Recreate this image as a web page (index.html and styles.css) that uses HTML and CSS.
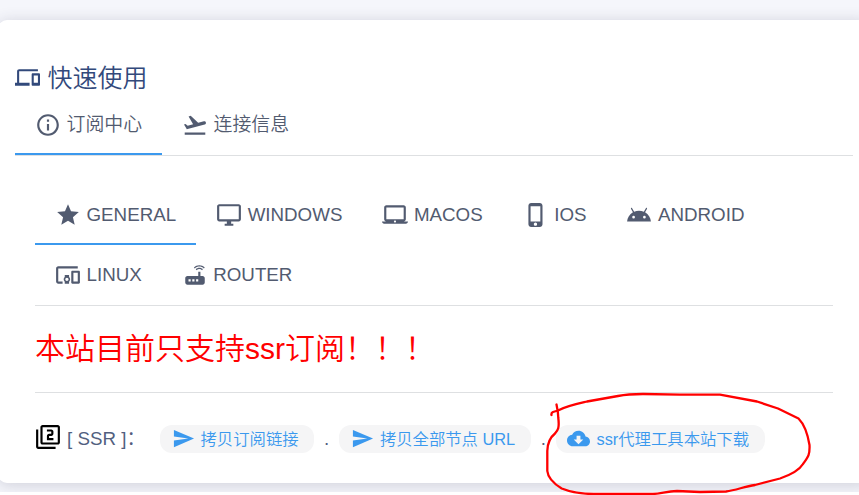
FILE: index.html
```html
<!DOCTYPE html>
<html lang="zh-CN">
<head>
<meta charset="utf-8">
<title>快速使用</title>
<link rel="stylesheet" href="styles.css">
</head>
<body>
<main class="page">
  <section class="card">
    <h2 class="title">
      <svg class="icon" viewBox="0 0 24 24"><path d="M4 6h18V4H4c-1.1 0-2 .9-2 2v11H0v3h14v-3H4V6zm19 2h-6c-.55 0-1 .45-1 1v10c0 .55.45 1 1 1h6c.55 0 1-.45 1-1V9c0-.55-.45-1-1-1zm-1 9h-4v-7h4v7z"/></svg>
      <span>快速使用</span>
    </h2>
    <nav class="tabs tabs-main">
      <a class="tab active"><svg class="icon" viewBox="0 0 24 24"><path d="M11 17h2v-6h-2v6zm1-15C6.48 2 2 6.48 2 12s4.48 10 10 10 10-4.48 10-10S17.520 2 12 2zm0 18c-4.410 0-8-3.590-8-8s3.590-8 8-8 8 3.590 8 8-3.590 8-8 8zM11 9h2V7h-2v2z"/></svg><span>订阅中心</span></a>
      <a class="tab"><svg class="icon" viewBox="0 0 24 24"><path d="M2.5 19h19v2h-19zm19.570-9.360c-.21-.8-1.040-1.280-1.840-1.060L14.920 10l-6.900-6.430-1.930.51 4.140 7.170-4.970 1.330-1.970-1.540-1.450.39 1.820 3.160.77 1.330 1.600-.43 5.310-1.420 4.350-1.160L21 11.490c.81-.23 1.280-1.050 1.070-1.850z"/></svg><span>连接信息</span></a>
    </nav>
    <div class="panel">
      <nav class="tabs tabs-os">
        <a class="tab active"><svg class="icon" viewBox="0 0 24 24"><path d="M12 17.270L18.180 21l-1.640-7.030L22 9.240l-7.190-.61L12 2 9.190 8.630 2 9.240l5.460 4.730L5.820 21z"/></svg><span>GENERAL</span></a>
        <a class="tab"><svg class="icon" viewBox="0 0 24 24"><path d="M21 2H3c-1.100 0-2 .9-2 2v12c0 1.100.9 2 2 2h7v2H8v2h8v-2h-2v-2h7c1.100 0 2-.9 2-2V4c0-1.100-.9-2-2-2zm0 14H3V4h18v12z"/></svg><span>WINDOWS</span></a>
        <a class="tab"><svg class="icon" viewBox="0 0 24 24"><path d="M20 18c1.100 0 1.990-.9 1.990-2L22 5c0-1.100-.9-2-2-2H4c-1.100 0-2 .9-2 2v11c0 1.100.9 2 2 2H0c0 1.100.9 2 2 2h20c1.100 0 2-.9 2-2h-4zM4 5h16v11H4V5zm8 14c-.55 0-1-.45-1-1s.45-1 1-1 1 .45 1 1-.45 1-1 1z"/></svg><span>MACOS</span></a>
        <a class="tab"><svg class="icon" viewBox="0 0 24 24"><path d="M15.500 1h-8C6.120 1 5 2.120 5 3.500v17C5 21.880 6.120 23 7.500 23h8c1.380 0 2.500-1.120 2.500-2.500v-17C18 2.120 16.880 1 15.500 1zm-4 21c-.83 0-1.500-.67-1.500-1.500s.67-1.500 1.500-1.500 1.500.67 1.500 1.500-.67 1.500-1.500 1.500zm4.500-4H7V4h9v14z"/></svg><span>IOS</span></a>
        <a class="tab"><svg class="icon" viewBox="0 0 24 24"><path d="M17.600 9.480l1.840-3.180c.16-.31.04-.69-.26-.85-.29-.15-.65-.06-.83.22l-1.880 3.240c-2.860-1.210-6.080-1.210-8.940 0L5.650 5.670c-.19-.29-.58-.38-.87-.2-.28.18-.37.54-.22.83L6.400 9.480C3.300 11.250 1.280 14.440 1 18h22c-.28-3.560-2.300-6.750-5.400-8.520zM7 15.250a1.250 1.250 0 1 1 0-2.500 1.250 1.250 0 0 1 0 2.500zm10 0a1.250 1.250 0 1 1 0-2.500 1.250 1.250 0 0 1 0 2.500z"/></svg><span>ANDROID</span></a>
        <a class="tab"><svg class="icon" viewBox="0 0 24 24"><path d="M3 6h18V4H3c-1.100 0-2 .9-2 2v12c0 1.100.9 2 2 2h4v-2H3V6zm10 6H9v1.780c-.61.55-1 1.330-1 2.220s.39 1.670 1 2.220V20h4v-1.780c.61-.55 1-1.340 1-2.220s-.39-1.670-1-2.220V12zm-2 5.500c-.83 0-1.500-.67-1.500-1.500s.67-1.500 1.500-1.500 1.500.67 1.500 1.500-.67 1.500-1.500 1.500zM22 8h-6c-.5 0-1 .5-1 1v10c0 .5.5 1 1 1h6c.5 0 1-.5 1-1V9c0-.5-.5-1-1-1zm-1 10h-4v-8h4v8z"/></svg><span>LINUX</span></a>
        <a class="tab"><svg class="icon" viewBox="0 0 24 24"><path d="M20.200 5.900l.8-.8C19.600 3.700 17.800 3 16 3s-3.600.7-5 2.100l.8.8C13 4.800 14.500 4.200 16 4.200s3 .6 4.200 1.700zm-.9.8c-.9-.9-2.100-1.400-3.300-1.400s-2.400.5-3.300 1.400l.8.8c.7-.7 1.600-1 2.500-1s1.800.3 2.500 1l.8-.8zM19 13h-2V9h-2v4H5c-1.100 0-2 .9-2 2v4c0 1.100.9 2 2 2h14c1.100 0 2-.9 2-2v-4c0-1.100-.9-2-2-2zM8 18H6v-2h2v2zm3.500 0h-2v-2h2v2zm3.500 0h-2v-2h2v2z"/></svg><span>ROUTER</span></a>
      </nav>
      <p class="notice">本站目前只支持ssr订阅！！！</p>
      <div class="links">
        <svg class="icon badge" viewBox="0 0 24 24"><path d="M3 5H1v16c0 1.100.9 2 2 2h16v-2H3V5zm18-4H7c-1.100 0-2 .9-2 2v14c0 1.100.9 2 2 2h14c1.100 0 2-.9 2-2V3c0-1.100-.9-2-2-2zm0 16H7V3h14v14zm-4-4h-4v-2h2c1.100 0 2-.89 2-2V7c0-1.110-.9-2-2-2h-4v2h4v2h-2c-1.100 0-2 .89-2 2v4h6v-2z"/></svg>
        <span class="label">[ SSR ]：</span>
        <a class="pill"><svg class="icon" viewBox="0 0 24 24"><path d="M2.010 21L23 12 2.010 3 2 10l15 2-15 2z"/></svg><span>拷贝订阅链接</span></a>
        <span class="dot">.</span>
        <a class="pill"><svg class="icon" viewBox="0 0 24 24"><path d="M2.010 21L23 12 2.010 3 2 10l15 2-15 2z"/></svg><span>拷贝全部节点 URL</span></a>
        <span class="dot">.</span>
        <a class="pill"><svg class="icon" viewBox="0 0 24 24"><path d="M19.350 10.040C18.670 6.590 15.640 4 12 4 9.110 4 6.600 5.640 5.350 8.040 2.340 8.360 0 10.910 0 14c0 3.310 2.690 6 6 6h13c2.760 0 5-2.240 5-5 0-2.640-2.050-4.780-4.650-4.960zM17 13l-5 5-5-5h3V9h4v4h3z"/></svg><span>ssr代理工具本站下载</span></a>
      </div>
    </div>
  </section>
</main>
<svg class="marker" viewBox="0 0 859 495"><path d="M556.5 404.500C557.500 409 558.200 413 558.300 418C559.500 428 558 430 555 433.500C550 437.500 547.500 442 547.300 451V471C548 479 556 485 561.700 488.500C573 493 582 494 594 494H653C662 493.500 667 491 677 491L700 492L726 491.500C737 490 744 486.500 755 485L780 478.500C793 474 800 469 803 464C808 457 810 455 809.500 445C808 436 805 425 798.500 418.500L778 408.500L757 401.500Q738 398 720 394.700H680L643 394C632 394 628 394 618 396L587 401.500C576 404 566 406 558 410.500L553 412Q551 413 551.500 415"/></svg>
</body>
</html>
```
FILE: styles.css
```css
* { box-sizing: border-box; }
html { background: #fff; }
body {
  margin: 0;
  width: 859px;
  height: 495px;
  overflow: hidden;
  background: #fff;
  color: #525f7f;
  font: 350 18.75px/28px "Liberation Sans", "Noto Sans CJK SC", sans-serif;
}
.page {
  height: 492px;
  padding-top: 20px;
  overflow: hidden;
  background: #f5f6fb;
}
.card {
  width: 872px;
  height: 463px;
  margin-left: -2px;
  padding: 40px 19px 0 17px;
  border-radius: 9px;
  background: #fff;
  box-shadow: 0 2px 16px rgba(50, 50, 80, .2);
}
.icon {
  flex: none;
  width: 26px;
  height: 26px;
  fill: currentColor;
}
.title {
  display: flex;
  align-items: center;
  gap: 7.5px;
  height: 35px;
  margin: 0;
  color: #32497b;
  font-size: 25px;
  font-weight: 350;
}
.title .icon { width: 25px; height: 25px; }
.tabs {
  display: flex;
  flex-wrap: wrap;
  border-bottom: 1px solid #dee0e2;
}
.tab {
  display: flex;
  align-items: center;
  gap: 5.5px;
  height: 60px;
  padding: 2px 20px 0;
  border-bottom: 2px solid transparent;
  white-space: nowrap;
  color: #525b70;
}
.tab.active { border-bottom-color: #3b99ee; }
.tabs-main { width: 838px; height: 61px; }
.tabs-main .tab { font-size: 18.9px; }
.panel { width: 798px; margin: 29px 0 0 20px; }
.tabs-os { height: 121px; }
.notice {
  height: 87px;
  margin: 0;
  border-bottom: 1px solid #dee0e2;
  color: #f00;
  font-size: 30px;
  line-height: 86px;
}
.links { display: flex; align-items: center; height: 92px; }
.badge { color: #000; margin-top: -4px; }
.label { width: 93px; margin-left: 6px; white-space: nowrap; }
.pill {
  display: flex;
  align-items: center;
  gap: 6px;
  height: 28px;
  padding: 0 15.5px 0 11.5px;
  border-radius: 12px;
  background: #f5f5f6;
  color: #3b99ee;
  font-size: 16.35px;
  white-space: nowrap;
}
.pill .icon { width: 23px; height: 23px; margin-top: -1px; }
.dot { width: 25.3px; text-align: center; }
.marker {
  position: absolute;
  top: 0;
  left: 0;
  width: 859px;
  height: 495px;
  fill: none;
  stroke: #f00;
  stroke-width: 2.3;
  stroke-linecap: round;
  stroke-linejoin: round;
}
```
